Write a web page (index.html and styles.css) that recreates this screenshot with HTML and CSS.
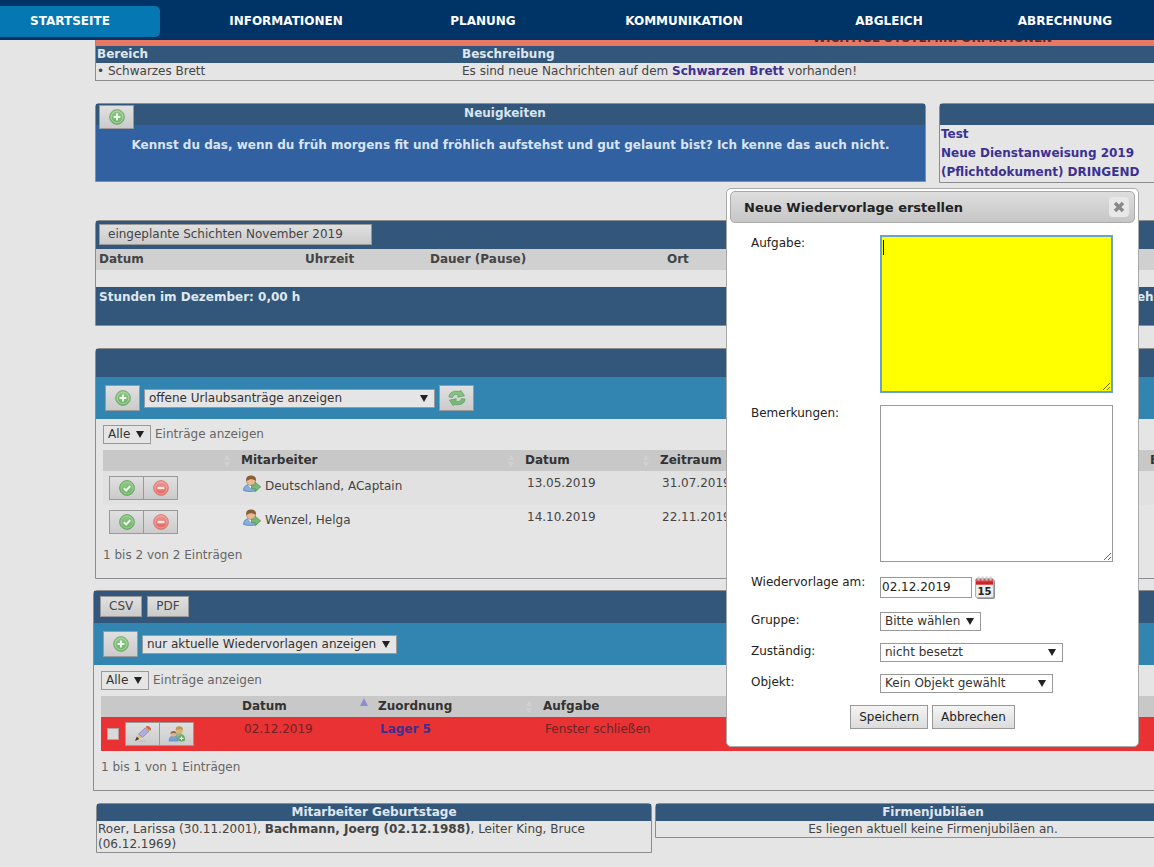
FILE: index.html
```html
<!DOCTYPE html>
<html lang="de">
<head>
<meta charset="utf-8">
<title>Startseite</title>
<link rel="stylesheet" href="styles.css">
</head>
<body>
<svg class="sprite" aria-hidden="true">
  <defs>
    <linearGradient id="green" x1="0" y1="0" x2="0" y2="1"><stop offset="0" stop-color="#94c98c"/><stop offset="1" stop-color="#68b263"/></linearGradient>
    <linearGradient id="red" x1="0" y1="0" x2="0" y2="1"><stop offset="0" stop-color="#ef9a94"/><stop offset="1" stop-color="#e0625c"/></linearGradient>
    <symbol id="i-add" viewBox="0 0 16 16"><circle cx="8" cy="8" r="7.4" fill="url(#green)" stroke="#7fae79"/><circle cx="8" cy="8" r="5.8" fill="none" stroke="#b5d9ae" stroke-width=".8"/><path d="M8 4.600v6.800M4.600 8h6.800" stroke="#eef6ec" stroke-width="2"/></symbol>
    <symbol id="i-check" viewBox="0 0 16 16"><circle cx="8" cy="8" r="7.4" fill="url(#green)" stroke="#6ba866"/><circle cx="8" cy="8" r="6" fill="none" stroke="#a5d29f" stroke-width=".8"/><path d="M4.800 8.200l2.400 2.300 4-4.400" fill="none" stroke="#eef6ec" stroke-width="2"/></symbol>
    <symbol id="i-minus" viewBox="0 0 16 16"><circle cx="8" cy="8" r="7.4" fill="url(#red)" stroke="#d9817b"/><circle cx="8" cy="8" r="6" fill="none" stroke="#f0b0ab" stroke-width=".8"/><path d="M4.500 8h7" stroke="#f7e9e8" stroke-width="2.4"/></symbol>
    <symbol id="i-refresh" viewBox="0 0 18 16"><path d="M1 7C1 2.500 6 .3 11 1.600l2-1.100 3.500 5.300-6.700 1.400.4-2.300C7.500 4 5.500 4.500 4.600 7.300z" fill="#86c083" stroke="#60a361" stroke-width=".8"/><path d="M17 9c0 4.500-5 6.700-10 5.400l-2 1.100L1.500 10.200l6.700-1.400-.4 2.300c2.700.9 4.700.4 5.600-2.400z" fill="#79b876" stroke="#60a361" stroke-width=".8"/></symbol>
    <symbol id="i-user" viewBox="0 0 18 17"><path d="M.6 15.500C.6 11.500 3 9.500 7 9.500s7 2 7 6c-3.500 1.300-10 1.300-13.400 0z" fill="#86aede" stroke="#5881b8" stroke-width=".8"/><path d="M5 10l3 3.500L10.500 10z" fill="#eee"/><ellipse cx="8" cy="6" rx="4.400" ry="4.600" fill="#e3ba92" stroke="#9b7550" stroke-width=".5"/><path d="M3.300 6.500C2.500 1.800 5 .4 8 .4s5.700 1.400 4.800 6.100C12 4.400 10 4.800 8 4 6.500 5 4.200 4.600 3.300 6.500z" fill="#8a5f38"/><path d="M8.500 10h3.700V7.200l5.500 4.700-5.500 4.600v-2.800H8.500z" fill="#78b871" stroke="#52924e" stroke-width=".7"/></symbol>
    <symbol id="i-pencil" viewBox="0 0 18 16"><path d="M1 15l1.800-4.600L5.400 13z" fill="#4a3a24"/><path d="M2.800 10.400L5 8.200l3.500 2.800L5.400 13z" fill="#e2bd7c"/><path d="M4.600 8L11 2l4 3.300-6.500 6z" fill="#b0acdf" stroke="#847fb8" stroke-width=".7"/><path d="M11 2l1.500-1.400L16.500 4 15 5.300z" fill="#dba54f"/><path d="M12.500.9c1.400-1.300 5 1 4 3z" fill="#d86557" stroke="#c85c50"/><path d="M4.500 15.300h7" stroke="#b9b9b9" stroke-width=".8"/></symbol>
    <symbol id="i-group" viewBox="0 0 18 17"><path d="M7 14.500c0-5 2-6.500 4.500-6.500S17 9.500 17 15.500z" fill="#8cba84" stroke="#649c60" stroke-width=".7"/><circle cx="11.500" cy="4.500" r="3.800" fill="#ddb478"/><path d="M7.600 4.200C7.200-.9 15.800-.9 15.400 4.200 13 2.600 10 4 7.600 4.200z" fill="#bf9850"/><path d="M.7 16c0-4 1.800-5.400 4.700-5.400s4.700 1.400 4.700 5.400z" fill="#73a2d8" stroke="#5482ba" stroke-width=".7"/><circle cx="5.300" cy="8.300" r="3.100" fill="#dfb68c"/><path d="M2 8.500C1.800 4.300 8.800 4.300 8.600 8.500 7 6.900 4 7.300 2 8.500z" fill="#8f6847"/><circle cx="13.800" cy="13.200" r="3.400" fill="#62a95c"/><path d="M13.800 11.200v4M11.800 13.200h4" stroke="#eef6ec" stroke-width="1.300"/></symbol>
    <symbol id="i-calendar" viewBox="0 0 20 23"><rect x="1.500" y="3.500" width="18.500" height="19.500" rx="2" fill="#8d8d8d"/><rect x=".5" y="2.500" width="18" height="19" rx="1.500" fill="#ececec" stroke="#b0b0b0"/><path d="M1 3h17v5.500H1z" fill="#e05050"/><path d="M1 5.500h17v3H1z" fill="#c92424"/><path d="M3.500.5v4M7.500.5v4M11.500.5v4M15.500.5v4" stroke="#cfc6c6" stroke-width="2"/><text x="9.500" y="18.500" text-anchor="middle" class="cal-day">15</text></symbol>
    <symbol id="i-close" viewBox="0 0 12 12"><path d="M2 2l8 8M10 2l-8 8" stroke="#888" stroke-width="3.400"/></symbol>
    <symbol id="i-sort" viewBox="0 0 8 14"><path d="M4 1l3 5H1zM4 13l3-5H1z" fill="#d1d1d1"/></symbol>
    <symbol id="i-sort-up" viewBox="0 0 8 14"><path d="M4 0l4 8H0z" fill="#8c8cd2"/></symbol>
  </defs>
</svg>

<nav class="menu">
  <a class="menu-item active" href="#">STARTSEITE</a>
  <a class="menu-item" href="#">INFORMATIONEN</a>
  <a class="menu-item" href="#">PLANUNG</a>
  <a class="menu-item" href="#">KOMMUNIKATION</a>
  <a class="menu-item" href="#">ABGLEICH</a>
  <a class="menu-item last" href="#">ABRECHNUNG</a>
</nav>

<main class="page">
  <section class="panel notices">
    <h2 class="alert">WICHTIGE SYSTEMINFORMATIONEN</h2>
    <table class="plain">
      <colgroup><col class="c-area"><col></colgroup>
      <thead><tr><th>Bereich</th><th>Beschreibung</th></tr></thead>
      <tbody><tr><td>• Schwarzes Brett</td><td>Es sind neue Nachrichten auf dem <a href="#">Schwarzen Brett</a> vorhanden!</td></tr></tbody>
    </table>
  </section>

  <div class="two-up">
    <section class="panel news">
      <header class="news-head">
        <button class="btn icon-btn" aria-label="Neuigkeit anlegen"><svg class="ic"><use href="#i-add"/></svg></button>
        <h2>Neuigkeiten</h2>
      </header>
      <p>Kennst du das, wenn du früh morgens fit und fröhlich aufstehst und gut gelaunt bist? Ich kenne das auch nicht.</p>
    </section>
    <section class="panel docs">
      <header class="docs-head"></header>
      <ul>
        <li><a href="#">Test</a></li>
        <li><a href="#">Neue Dienstanweisung 2019</a></li>
        <li><a href="#">(Pflichtdokument) DRINGEND</a></li>
      </ul>
    </section>
  </div>

  <section class="panel shifts">
    <header class="shifts-head"><button class="btn month">eingeplante Schichten November 2019</button></header>
    <table class="plain shift-table">
      <colgroup><col class="c-date"><col class="c-time"><col class="c-break"><col></colgroup>
      <thead><tr><th>Datum</th><th>Uhrzeit</th><th>Dauer (Pause)</th><th>Ort</th></tr></thead>
    </table>
    <footer class="totals"><span>Stunden im Dezember: 0,00 h</span><span class="more">mehr</span></footer>
  </section>

  <section class="panel requests">
    <header class="bar"></header>
    <div class="tools">
      <button class="btn icon-btn" aria-label="Antrag anlegen"><svg class="ic"><use href="#i-add"/></svg></button>
      <span class="pick wide"><select aria-label="Anträge filtern"><option>offene Urlaubsanträge anzeigen</option></select></span>
      <button class="btn icon-btn" aria-label="Aktualisieren"><svg class="ic ic-wide"><use href="#i-refresh"/></svg></button>
    </div>
    <div class="list">
      <label class="length"><span class="pick"><select><option>Alle</option></select></span>Einträge anzeigen</label>
      <table class="data">
        <colgroup><col class="r-act"><col class="r-name"><col class="r-date"><col class="r-span"><col></colgroup>
        <thead><tr>
          <th><svg class="sort"><use href="#i-sort"/></svg></th>
          <th>Mitarbeiter<svg class="sort"><use href="#i-sort"/></svg></th>
          <th>Datum<svg class="sort"><use href="#i-sort"/></svg></th>
          <th>Zeitraum</th>
          <th>Bemerkung</th>
        </tr></thead>
        <tbody>
          <tr class="odd">
            <td class="actions"><div class="pair"><button class="btn icon-btn" aria-label="Genehmigen"><svg class="ic"><use href="#i-check"/></svg></button><button class="btn icon-btn" aria-label="Ablehnen"><svg class="ic"><use href="#i-minus"/></svg></button></div></td>
            <td><span class="person"><svg class="ic ic-wide"><use href="#i-user"/></svg><span>Deutschland, ACaptain</span></span></td>
            <td>13.05.2019</td><td>31.07.2019</td><td></td>
          </tr>
          <tr>
            <td class="actions"><div class="pair"><button class="btn icon-btn" aria-label="Genehmigen"><svg class="ic"><use href="#i-check"/></svg></button><button class="btn icon-btn" aria-label="Ablehnen"><svg class="ic"><use href="#i-minus"/></svg></button></div></td>
            <td><span class="person"><svg class="ic ic-wide"><use href="#i-user"/></svg><span>Wenzel, Helga</span></span></td>
            <td>14.10.2019</td><td>22.11.2019</td><td></td>
          </tr>
        </tbody>
      </table>
      <p class="info">1 bis 2 von 2 Einträgen</p>
    </div>
  </section>

  <section class="panel followups">
    <header class="bar exports"><button class="btn">CSV</button><button class="btn">PDF</button></header>
    <div class="tools">
      <button class="btn icon-btn" aria-label="Wiedervorlage anlegen"><svg class="ic"><use href="#i-add"/></svg></button>
      <span class="pick"><select aria-label="Wiedervorlagen filtern"><option>nur aktuelle Wiedervorlagen anzeigen</option></select></span>
    </div>
    <div class="list">
      <label class="length"><span class="pick"><select><option>Alle</option></select></span>Einträge anzeigen</label>
      <table class="data">
        <colgroup><col class="f-act"><col class="f-date"><col class="f-ref"><col></colgroup>
        <thead><tr>
          <th></th>
          <th>Datum<svg class="sort up"><use href="#i-sort-up"/></svg></th>
          <th>Zuordnung<svg class="sort"><use href="#i-sort"/></svg></th>
          <th>Aufgabe</th>
        </tr></thead>
        <tbody>
          <tr class="due">
            <td class="actions"><div class="pair"><input type="checkbox" aria-label="Auswählen"><button class="btn icon-btn" aria-label="Bearbeiten"><svg class="ic ic-wide"><use href="#i-pencil"/></svg></button><button class="btn icon-btn" aria-label="Zuweisen"><svg class="ic ic-wide"><use href="#i-group"/></svg></button></div></td>
            <td>02.12.2019</td><td><a href="#">Lager 5</a></td><td>Fenster schließen</td>
          </tr>
        </tbody>
      </table>
      <p class="info">1 bis 1 von 1 Einträgen</p>
    </div>
  </section>

  <div class="three-up">
    <section class="panel small">
      <h2>Mitarbeiter Geburtstage</h2>
      <p>Roer, Larissa (30.11.2001), <b>Bachmann, Joerg (02.12.1988)</b>, Leiter King, Bruce (06.12.1969)</p>
    </section>
    <section class="panel small centered">
      <h2>Firmenjubiläen</h2>
      <p>Es liegen aktuell keine Firmenjubiläen an.</p>
    </section>
  </div>
</main>

<form class="dialog" role="dialog" aria-labelledby="dialog-title">
  <header class="dialog-head">
    <h2 id="dialog-title">Neue Wiedervorlage erstellen</h2>
    <button type="button" class="close" aria-label="Schließen"><svg><use href="#i-close"/></svg></button>
  </header>
  <div class="fields">
    <label for="task">Aufgabe:</label>
    <textarea id="task" class="required"></textarea>
    <label for="notes">Bemerkungen:</label>
    <textarea id="notes"></textarea>
    <label for="due">Wiedervorlage am:</label>
    <div class="date"><input id="due" type="text" value="02.12.2019"><button type="button" class="cal" aria-label="Kalender"><svg><use href="#i-calendar"/></svg></button></div>
    <label for="group">Gruppe:</label>
    <span class="pick"><select id="group"><option>Bitte wählen</option></select></span>
    <label for="owner">Zuständig:</label>
    <span class="pick owner"><select id="owner"><option>nicht besetzt</option></select></span>
    <label for="object">Objekt:</label>
    <span class="pick object"><select id="object"><option>Kein Objekt gewählt</option></select></span>
  </div>
  <footer class="dialog-foot"><button type="button" class="btn">Speichern</button><button type="button" class="btn">Abbrechen</button></footer>
</form>
</body>
</html>
```

FILE: styles.css
```css
* { box-sizing: border-box; }
body {
  margin: 0;
  background: #e5e5e5;
  color: #444;
  font: 12px/17px "DejaVu Sans", sans-serif;
  overflow: hidden;
}
button, input, select, textarea { font: inherit; color: inherit; margin: 0; }
h2, p, ul { margin: 0; padding: 0; font-size: inherit; }
ul { list-style: none; }
a { color: #3a3193; font-weight: bold; text-decoration: none; }
th { text-align: left; }
.sprite { position: absolute; width: 0; height: 0; }
.cal-day { font: bold 10px "DejaVu Sans", sans-serif; fill: #222; }

/* Top menu */
.menu {
  position: fixed;
  inset: 0 0 auto 0;
  z-index: 2;
  height: 40px;
  padding: 6px 0 3px;
  display: grid;
  grid-template-columns: 160fr 252fr 142fr 260fr 150fr 190fr;
  background: #036;
}
.menu-item {
  display: flex;
  align-items: center;
  justify-content: center;
  color: #fff;
}
.menu-item.active {
  padding-right: 20px;
  border-radius: 0 5px 5px 0;
  background: #0577b2;
}
.menu-item.last { padding-left: 12px; }

/* Content is wider than the window and runs out on the right */
.page { margin: 0 -616px 0 95px; padding-top: 28px; }
.panel { border: 1px solid #8a8c90; border-radius: 4px 4px 0 0; }
.plain, .data { width: 100%; border-collapse: collapse; table-layout: fixed; }
.plain th, .plain td { padding: 0 1px; }

.notices { border-top: 0; margin-bottom: 22px; }
.alert { height: 18px; background: #e67864; color: #542c30; text-align: center; line-height: 20px; }
.notices th { background: #33577a; color: #dfe7f0; }
.c-area { width: 365px; }

.two-up { display: grid; grid-template-columns: 1fr 1fr; gap: 13px; align-items: start; margin-bottom: 37px; }
.news { height: 79px; background: #3161a0; color: #d8e4f2; font-weight: bold; text-align: center; }
.news-head { height: 21px; display: flex; background: #33577a; padding: 1px 3px; }
.news-head h2 { flex: 1; padding-right: 46px; }
.news p { padding-top: 12px; }
.docs-head { height: 21px; background: #33577a; }
.docs li { line-height: 19px; padding-left: 1px; }

.btn {
  border: 1px solid #999;
  border-radius: 0;
  background: linear-gradient(#e0e0e0, #cbcbcb);
  padding: 0 8px;
  height: 21px;
  color: #444;
  white-space: nowrap;
}
.icon-btn { flex: none; width: 35px; height: 26px; padding: 0; display: flex; align-items: center; justify-content: center; }
.ic { width: 16px; height: 16px; flex: none; }
.ic-wide { width: 18px; }
.news-head .icon-btn { height: 24px; }

.shifts { margin-bottom: 22px; }
.shifts-head { padding: 3px; height: 28px; background: #33577a; }
.month { width: 273px; text-align: left; }
.shift-table { margin-bottom: 17px; }
.shift-table th { height: 21px; background: #d0d0d0; padding: 0 3px; }
.c-date { width: 206px; }
.c-time { width: 125px; }
.c-break { width: 237px; }
.totals { display: flex; gap: 824px; height: 38px; padding: 2px 3px; background: #33577a; color: #dfe7f0; font-weight: bold; }

.bar { height: 28px; background: #33577a; }
.tools { display: flex; align-items: center; gap: 4px; height: 42px; padding: 0 9px; background: #3285b1; }

.pick { position: relative; display: inline-flex; color: #333; }
.pick::after {
  content: "";
  position: absolute;
  right: 7px;
  top: 6px;
  border: 4px solid transparent;
  border-top: 7px solid #222;
  border-bottom: 0;
  pointer-events: none;
}
.pick select {
  appearance: none;
  width: 100%;
  height: 19px;
  padding: 0 19px 0 4px;
  border: 1px solid #999;
  border-radius: 0;
  background: #e5e5e5;
  line-height: 17px;
}
.pick.wide { width: 291px; }

.list { padding: 6px 0 14px 7px; }
.length { display: flex; align-items: center; gap: 4px; margin-bottom: 6px; color: #666; }
.data th { position: relative; height: 21px; padding: 0 10px; background: #c8c8c8; color: #333; }
.data td { height: 34px; padding: 4px 12px; vertical-align: top; }
.data .actions { padding: 0 6px; vertical-align: middle; }
.odd { background: #e1e1e1; }
.pair { display: flex; align-items: center; }
.pair .icon-btn { height: 24px; }
.pair .icon-btn + .icon-btn { margin-left: -1px; }
.sort { position: absolute; right: 0; top: 4px; width: 8px; height: 14px; }
.sort.up { top: 2px; }
.person { display: flex; gap: 4px; }
.person .ic { height: 17px; }
.person span { padding-top: 3px; }
.info { padding-top: 8px; color: #666; }
.r-act { width: 128px; }
.r-name { width: 284px; }
.r-date { width: 135px; }
.r-span { width: 490px; }

.requests { margin-bottom: 11px; }
.followups { margin: 0 0 12px -2px; }
.exports { height: 32px; display: flex; gap: 5px; padding: 5px 6px; }
.due { background: #e83234; }
.due td { color: #6c2424; }
.due input { appearance: none; width: 12px; height: 12px; margin-right: 6px; border: 1px solid #b8a0a0; background: #d9d9d9; }
.f-act { width: 131px; }
.f-date { width: 136px; }
.f-ref { width: 165px; }

.three-up { display: grid; grid-template-columns: repeat(3, 1fr); gap: 3px; align-items: start; margin-left: 1px; }
.small h2 { background: #33577a; color: #dfe7f0; text-align: center; line-height: 17px; }
.small p { padding: 1px 1px 0; line-height: 15px; }
.small.centered p { text-align: center; }

/* Dialog */
.dialog {
  position: absolute;
  left: 726px;
  top: 188px;
  z-index: 3;
  width: 413px;
  padding: 2px 3px 17px;
  border: 1px solid #aaa;
  border-radius: 5px;
  background: #fff;
  color: #222;
}
.dialog-head {
  display: flex;
  align-items: center;
  justify-content: space-between;
  height: 32px;
  padding: 0 5px 0 13px;
  border: 1px solid #aaa;
  border-radius: 5px;
  background: linear-gradient(#dedede, #c6c6c6);
}
.dialog-head h2 { font-size: 13px; }
.close { display: flex; align-items: center; justify-content: center; width: 20px; height: 20px; padding: 0; border: 0; border-radius: 4px; background: #e8e8e8; }
.close svg { width: 12px; height: 12px; }
.fields { display: grid; grid-template-columns: 129px 1fr; row-gap: 12px; padding: 12px 21px 12px; align-items: start; justify-items: start; }
.fields textarea { width: 233px; height: 157px; padding: 2px; border: 1px solid #999; background: #fff; resize: both; }
.fields textarea.required { height: 158px; border: 2px solid #6aa3c8; outline: 0; background: linear-gradient(#000, #000) 1px 3px / 1px 15px no-repeat #ff0; }
.date { display: flex; align-items: center; gap: 3px; height: 26px; }
.date input { width: 92px; height: 21px; padding: 0 1px; border: 1px solid #999; }
.cal { width: 20px; height: 24px; padding: 0; border: 0; background: none; }
.cal svg { display: block; width: 20px; height: 23px; }
.dialog .pick select { background: #fff; }
.owner { width: 183px; }
.object { width: 173px; }
.dialog-foot { display: flex; justify-content: center; gap: 4px; }
.dialog .btn { height: 24px; padding: 0 8px; color: #222; background: linear-gradient(#f4f4f4, #dcdcdc); }
```
